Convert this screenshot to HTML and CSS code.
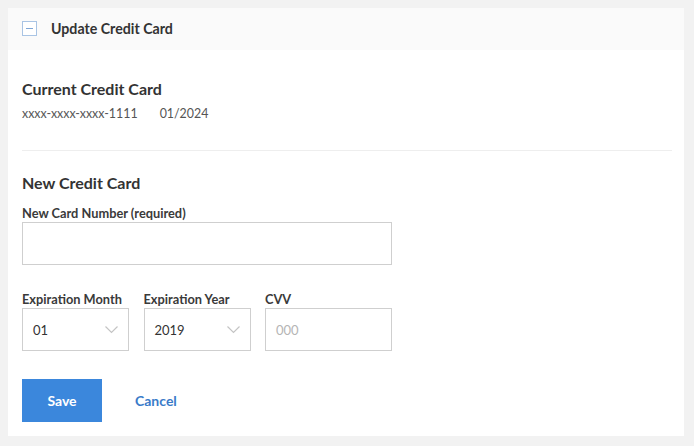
FILE: index.html
```html
<!DOCTYPE html>
<html>
<head>
<meta charset="utf-8">
<link rel="stylesheet" href="styles.css">
</head>
<body>
<div class="panel">
  <div class="panel-header">
    <svg class="toggle" width="15" height="15" viewBox="0 0 15 15">
      <rect x="0.5" y="0.5" width="14" height="14" fill="#fff" stroke="#a9c4e4"/>
      <line x1="4" y1="7.5" x2="11" y2="7.5" stroke="#7fa6d6" stroke-width="1"/>
    </svg>
    <span class="panel-title">Update Credit Card</span>
  </div>
  <div class="panel-body">
    <h2 class="section-title first">Current Credit Card</h2>
    <div class="card-info"><span>xxxx-xxxx-xxxx-1111</span><span>01/2024</span></div>
    <hr class="divider">
    <h2 class="section-title">New Credit Card</h2>
    <label class="field-label">New Card Number (required)</label>
    <div class="input wide"></div>
    <div class="row">
      <div class="field">
        <label class="field-label">Expiration Month</label>
        <div class="input select small"><span>01</span>
          <svg class="chev" width="13" height="8" viewBox="0 0 13 8"><polyline points="0.5,0.5 6.5,6.5 12.5,0.5" fill="none" stroke="#c4c4c4" stroke-width="1.2"/></svg>
        </div>
      </div>
      <div class="field">
        <label class="field-label">Expiration Year</label>
        <div class="input select small"><span>2019</span>
          <svg class="chev" width="13" height="8" viewBox="0 0 13 8"><polyline points="0.5,0.5 6.5,6.5 12.5,0.5" fill="none" stroke="#c4c4c4" stroke-width="1.2"/></svg>
        </div>
      </div>
      <div class="field">
        <label class="field-label">CVV</label>
        <div class="input cvv"><span class="placeholder">000</span></div>
      </div>
    </div>
    <div class="actions">
      <button class="btn-save">Save</button>
      <a class="btn-cancel">Cancel</a>
    </div>
  </div>
</div>
</body>
</html>
```
FILE: styles.css
```css
* { box-sizing: border-box; }
body {
  margin: 0;
  padding: 8px 10px 10px 8px;
  background: #f2f2f2;
  font-family: Lato, "Open Sans", sans-serif;
  color: #333;
}
.panel {
  width: 676px;
  height: 428px;
  background: #fff;
}
.panel-header {
  height: 42px;
  background: #fafafa;
  display: flex;
  align-items: center;
  padding-left: 14px;
  padding-bottom: 2px;
  gap: 14px;
}
.toggle { display: block; }
.panel-title {
  font-size: 14.2px;
  font-weight: 700;
  color: #333;
}
.panel-body {
  padding: 29px 12px 14px 14px;
}
.section-title {
  margin: 0;
  font-size: 16px;
  line-height: 20px;
  font-weight: 700;
  color: #333;
}
.card-info {
  margin-top: 7px;
  font-size: 12.4px;
  line-height: 16px;
  color: #555;
  display: flex;
  gap: 22px;
}
.divider {
  border: 0;
  border-top: 1px solid #eeeeee;
  margin: 28px 0 22px;
}
.field-label {
  display: block;
  margin-top: 12px;
  font-size: 12.8px;
  line-height: 16px;
  font-weight: 700;
  color: #3a3a3a;
}
.input {
  border: 1px solid #cfcfcf;
  height: 43px;
  margin-top: 1px;
  display: flex;
  align-items: center;
  padding: 0 10px;
  font-size: 13px;
  color: #333;
}
.input.wide { width: 370px; }
.row {
  display: flex;
  gap: 14.5px;
  margin-top: 14px;
}
.select { justify-content: space-between; padding-right: 10px; }
.small { width: 107px; }
.cvv { width: 127px; }
.placeholder { color: #b5b5b5; }
.chev { display: block; margin-top: 1px; }
.actions {
  margin-top: 28px;
  display: flex;
  align-items: center;
  gap: 33px;
}
.btn-save {
  width: 80px;
  height: 43px;
  border: 0;
  background: #3b87dc;
  color: #fff;
  font-family: Lato, sans-serif;
  font-weight: 700;
  font-size: 14px;
  padding: 0;
}
.btn-cancel {
  color: #3a7bc9;
  font-weight: 700;
  font-size: 14px;
}
```
